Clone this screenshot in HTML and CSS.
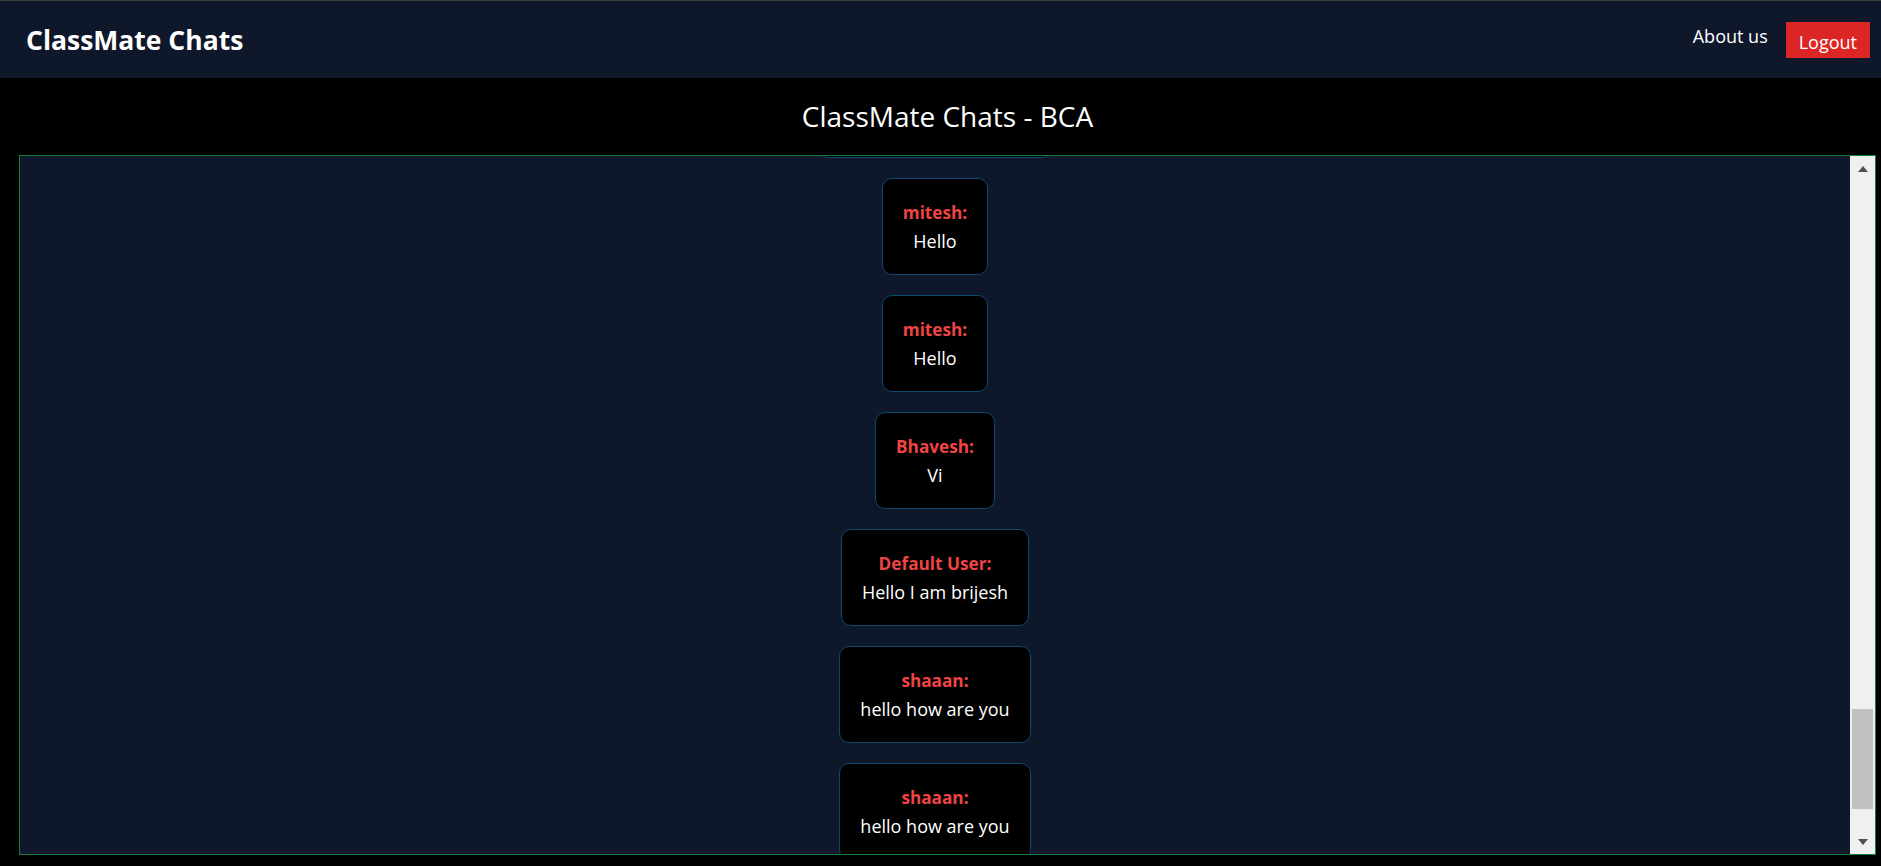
FILE: index.html
```html
<!DOCTYPE html>
<html lang="en">
<head>
<meta charset="utf-8">
<title>ClassMate Chats - BCA</title>
<link rel="stylesheet" href="styles.css">
</head>
<body>
<header class="topbar">
  <h1 class="brand">ClassMate Chats</h1>
  <nav class="nav">
    <a class="nav-link" href="#">About us</a>
    <button class="logout" type="button">Logout</button>
  </nav>
</header>
<main class="main">
  <h2 class="room-title">ClassMate Chats - BCA</h2>
  <section class="chat">
    <div class="messages" id="messages">
      <div class="msg"><div class="msg-name">mitesh:</div><div class="msg-text">Hi</div></div>
      <div class="msg"><div class="msg-name">Bhavesh:</div><div class="msg-text">Hello all</div></div>
      <div class="msg"><div class="msg-name">shaaan:</div><div class="msg-text">hii</div></div>
      <div class="msg"><div class="msg-name">Default User:</div><div class="msg-text">Hello I am brijesh patel</div></div>
      <div class="msg"><div class="msg-name">mitesh:</div><div class="msg-text">Hello</div></div>
      <div class="msg"><div class="msg-name">mitesh:</div><div class="msg-text">Hello</div></div>
      <div class="msg"><div class="msg-name">Bhavesh:</div><div class="msg-text">Vi</div></div>
      <div class="msg"><div class="msg-name">Default User:</div><div class="msg-text">Hello I am brijesh</div></div>
      <div class="msg"><div class="msg-name">shaaan:</div><div class="msg-text">hello how are you</div></div>
      <div class="msg"><div class="msg-name">shaaan:</div><div class="msg-text">hello how are you</div></div>
    </div>
    <div class="scrollbar">
      <div class="sb-btn"><span class="arrow-up"></span></div>
      <div class="sb-track"><div class="sb-thumb"></div></div>
      <div class="sb-btn"><span class="arrow-down"></span></div>
    </div>
  </section>
</main>
<script src="script.js"></script>
</body>
</html>
```
FILE: styles.css
```css
* { box-sizing: border-box; }

html, body {
  margin: 0;
  padding: 0;
  background: #000;
  color: #fff;
  font-family: "Open Sans", "Noto Sans", sans-serif;
}

.topbar {
  height: 78px;
  border-top: 1px solid #3c3c3c;
  background: #0f172a;
  display: flex;
  align-items: center;
  justify-content: space-between;
  padding: 0 11px 0 26px;
}

.brand {
  margin: 0;
  font-size: 26.5px;
  font-weight: 700;
  line-height: 36px;
  color: #fff;
}

.nav {
  display: flex;
  align-items: center;
  gap: 18px;
}

.nav-link {
  color: #fff;
  text-decoration: none;
  font-size: 18px;
  line-height: 24px;
  margin-bottom: 8px;
}

.logout {
  background: #dc2626;
  color: #fff;
  border: none;
  font-family: inherit;
  font-size: 18px;
  line-height: 24px;
  height: 36px;
  padding: 8px 13px 4px;
  margin: 0;
}

.main {
  padding: 0 5px 11px 19px;
}

.room-title {
  margin: 0;
  padding: 20px 0;
  font-size: 28px;
  font-weight: 400;
  line-height: 37px;
  text-align: center;
  color: #fff;
}

.chat {
  height: 700px;
  border: 1px solid #15803d;
  background: #0f172a;
  display: flex;
}

.messages {
  flex: 1;
  overflow: hidden;
  display: flex;
  flex-direction: column;
  align-items: center;
  gap: 20px;
  padding: 20px 0;
}

.msg {
  flex: none;
  background: #000;
  border: 1px solid #0c4a6e;
  border-radius: 10px;
  padding: 20px 20px 19px;
  text-align: center;
  font-size: 18px;
}

.msg-name {
  color: #ef4444;
  font-weight: 700;
  font-size: 17.2px;
  line-height: 28px;
}

.msg-text {
  color: #fff;
  line-height: 28px;
}

.scrollbar {
  width: 25px;
  flex: none;
  background: #f0f0f0;
  display: flex;
  flex-direction: column;
}

.sb-btn {
  height: 25px;
  flex: none;
  display: flex;
  align-items: center;
  justify-content: center;
}

.arrow-up {
  width: 0;
  height: 0;
  border-left: 5.5px solid transparent;
  border-right: 5.5px solid transparent;
  border-bottom: 6px solid #505050;
}

.arrow-down {
  width: 0;
  height: 0;
  border-left: 5.5px solid transparent;
  border-right: 5.5px solid transparent;
  border-top: 6px solid #505050;
}

.sb-track {
  flex: 1;
}

.sb-thumb {
  margin: 528px 2px 0 2px;
  height: 100px;
  background: #c1c1c1;
}
```
FILE: script.js
```js
document.getElementById('messages').scrollTop = 466;
```
